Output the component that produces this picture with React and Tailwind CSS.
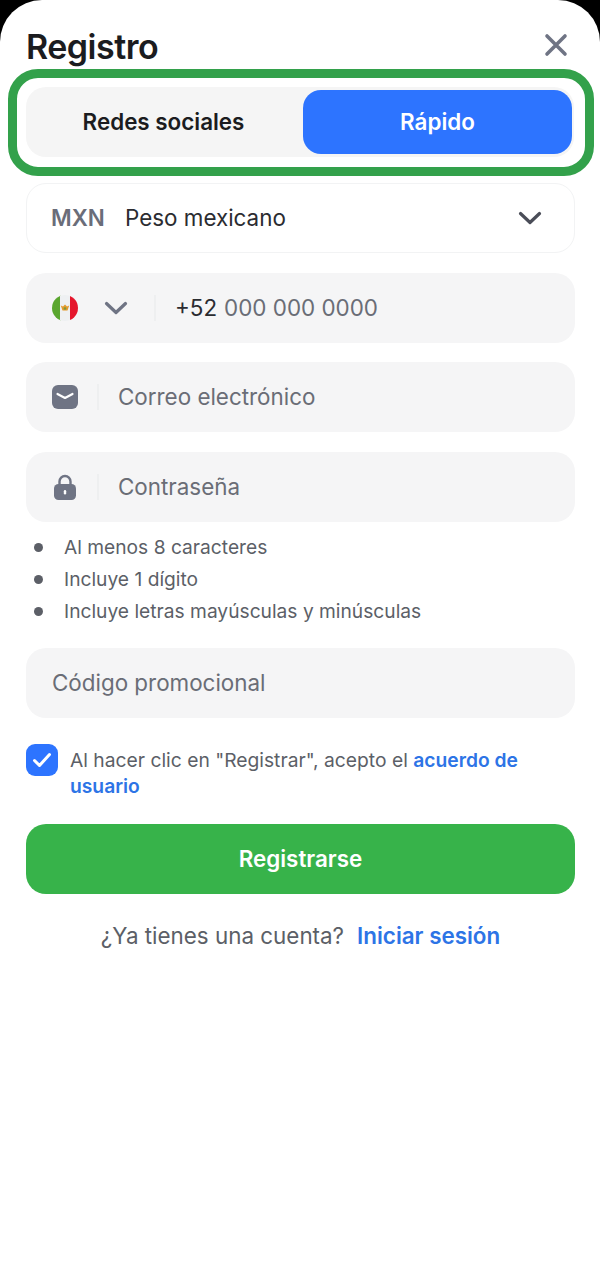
const inter = { fontFamily: 'Inter, sans-serif' };

const Chevron = ({ className }) => (
  <svg viewBox="0 0 24 14" fill="none" className={className}>
    <path d="M2.5 2.5 12 11.5 21.5 2.5" stroke="currentColor" strokeWidth="3.2" strokeLinecap="round" strokeLinejoin="round" />
  </svg>
);

const Divider = () => <div className="w-[2px] h-[26px] bg-[#eeeff0]" />;

const Flag = () => (
  <svg viewBox="0 0 26 26" className="w-[26px] h-[26px]">
    <defs>
      <clipPath id="flag">
        <circle cx="13" cy="13" r="13" />
      </clipPath>
    </defs>
    <g clipPath="url(#flag)">
      <rect width="9" height="26" fill="#5aa62f" />
      <rect x="8" width="10" height="26" fill="#eef0f2" />
      <rect x="18" width="8" height="26" fill="#e5162c" />
      <path d="M8.8 10.5 11 11.5 13 9.5 15 11.5 17.2 10.5 15.5 15.5H10.5z" fill="#e39a2d" />
      <circle cx="13" cy="13.5" r="1.3" fill="#7d9a3a" />
    </g>
  </svg>
);

const Mail = () => (
  <svg viewBox="0 0 26 24" className="w-[26px] h-[24px]">
    <rect width="26" height="24" rx="6" fill="#6f7484" />
    <path d="M5.5 9 13 13 20.5 9" fill="none" stroke="#fff" strokeWidth="2.2" strokeLinecap="round" strokeLinejoin="round" />
  </svg>
);

const Lock = () => (
  <svg viewBox="0 0 22 26" className="w-[22px] h-[26px]">
    <path d="M5.5 11V7.5a5.5 5.5 0 0 1 11 0V11" fill="none" stroke="#6f7484" strokeWidth="2.4" />
    <rect y="10" width="22" height="16" rx="4.5" fill="#6f7484" />
    <rect x="9.8" y="16" width="2.4" height="4.5" rx="1.2" fill="#fff" />
  </svg>
);

const Field = ({ children, className = '' }) => (
  <div className={`h-[70px] rounded-[20px] bg-[#f5f5f6] flex items-center ${className}`}>{children}</div>
);

const Rule = ({ text }) => (
  <li className="h-8 flex items-center text-[19.2px] text-[#5c5f67]">
    <span className="w-[9px] h-[9px] rounded-full bg-[#5c5f67] ml-[8px] mr-[21px]" />
    {text}
  </li>
);

export default function App() {
  return (
    <div className="w-[600px] h-[1280px] bg-black overflow-hidden" style={inter}>
      <div className="h-full bg-white rounded-t-[42px] flex flex-col">
        <div className="h-[69px] pl-[26px] pr-[32px] flex items-center justify-between">
          <h1 className="text-[34px] font-semibold text-[#1b1c20] tracking-[-0.5px] mt-[24px]">Registro</h1>
          <svg viewBox="0 0 24 24" fill="none" className="w-[24px] h-[24px] mt-[20px] text-[#6f7484]">
            <path d="M3 3 21 21M21 3 3 21" stroke="currentColor" strokeWidth="3.6" strokeLinecap="round" />
          </svg>
        </div>

        <div className="ml-[8px] w-[586px] h-[107px] border-[9px] border-[#33a14b] rounded-[30px] pl-[9px] pt-[9px]">
          <div className="w-[548px] h-[70px] rounded-[20px] bg-[#f5f5f5] flex items-center">
            <div className="w-[275px] mr-[2px] text-center text-[22.4px] font-semibold text-[#1b1c20]">Redes sociales</div>
            <div className="w-[269px] h-[64px] rounded-[18px] bg-[#2d74ff] flex items-center justify-center text-[22.4px] font-semibold text-white">
              Rápido
            </div>
          </div>
        </div>

        <div className="pl-[26px] pr-[25px] pt-[7px] flex flex-col">
          <div className="h-[70px] rounded-[20px] border border-[#f2f3f4] flex items-center pl-[24px] pr-[32px] pb-[1px]">
            <span className="text-[22.4px] font-semibold text-[#6a6d79] w-[74px]">MXN</span>
            <span className="text-[22.4px] text-[#2b2c31] flex-1">Peso mexicano</span>
            <Chevron className="w-[24px] h-[14px] text-[#4a4d58]" />
          </div>

          <Field className="mt-[20px] pl-[26px] pb-[1px]">
            <Flag />
            <Chevron className="w-[24px] h-[14px] text-[#6f7484] ml-[26px]" />
            <div className="ml-[26px]"><Divider /></div>
            <span className="ml-[19px] text-[22.4px] text-[#2b2c31]">+52</span>
            <span className="ml-[7px] text-[22.4px] text-[#6a6d76]">000 000 0000</span>
          </Field>

          <Field className="mt-[19px] pl-[26px]">
            <Mail />
            <div className="ml-[19px]"><Divider /></div>
            <span className="ml-[19px] text-[22.4px] text-[#6a6d76]">Correo electrónico</span>
          </Field>

          <Field className="mt-[20px] pl-[28px] pb-[1px]">
            <Lock />
            <div className="ml-[21px]"><Divider /></div>
            <span className="ml-[19px] text-[22.4px] text-[#6a6d76]">Contraseña</span>
          </Field>

          <ul className="mt-[9px]">
            <Rule text="Al menos 8 caracteres" />
            <Rule text="Incluye 1 dígito" />
            <Rule text="Incluye letras mayúsculas y minúsculas" />
          </ul>

          <Field className="mt-[21px] pl-[26px]">
            <span className="text-[22.4px] text-[#6a6d76]">Código promocional</span>
          </Field>

          <div className="mt-[26px] flex items-start">
            <div className="w-[32px] h-[32px] rounded-[9px] bg-[#2d74ff] flex items-center justify-center shrink-0">
              <svg viewBox="0 0 20 16" fill="none" className="w-[20px] h-[16px]">
                <path d="M2.5 8.5 7.5 13.5 17.5 2.5" stroke="#fff" strokeWidth="3" strokeLinecap="round" strokeLinejoin="round" />
              </svg>
            </div>
            <p className="ml-[12px] text-[19.25px] leading-[26px] text-[#5c5f67] pt-[3px]">
              Al hacer clic en "Registrar", acepto el <span className="font-semibold text-[#2d74e6]">acuerdo de usuario</span>
            </p>
          </div>

          <div className="mt-[25px] h-[70px] rounded-[20px] bg-[#37b34a] flex items-center justify-center text-[22.4px] font-semibold text-white">
            Registrarse
          </div>

          <div className="mt-[28px] flex justify-center text-[22.4px] leading-[28px]">
            <span className="text-[#5c5f67]">¿Ya tienes una cuenta?</span>
            <span className="ml-[13px] font-semibold text-[#2d74e6]">Iniciar sesión</span>
          </div>
        </div>
      </div>
    </div>
  );
}
